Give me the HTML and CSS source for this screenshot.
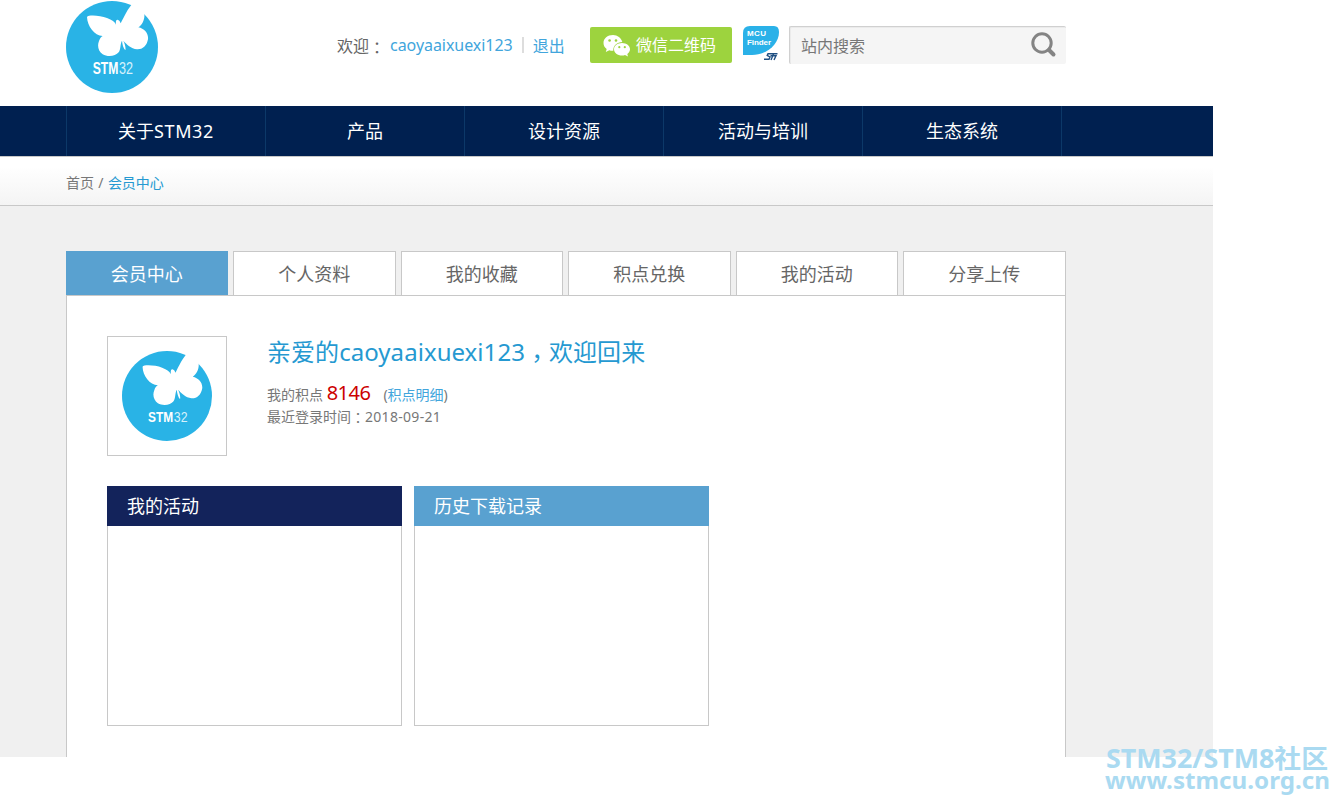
FILE: index.html
```
<!DOCTYPE html>
<html lang="zh-CN">
	<head>
		<meta charset="utf-8">
		<title>会员中心</title>
		<link rel="stylesheet" href="styles.css">
	</head>
	<body>
		<div class="page">
			<div class="header">
				<svg class="logo" viewBox="48 3 276 276">
					<circle cx="186" cy="141" r="138" fill="#29b3e6"/>
					<path fill="#fff" d="M111 51C115 44 150 46 171 54C186 60 195 66 198 74C196 62 200 57 204 60C209 61 210 66 212 70C222 50 234 24 248 11L266 0L294 30L283 40C285 58 277 74 265 82C283 86 296 100 294 118C290 139 277 149 261 148C243 146 230 133 220 122C224 130 228 142 226 151C220 145 217 133 216 122C210 132 213 148 206 157C197 169 173 172 158 163C145 154 141 137 147 123C150 115 153 110 158 108C133 107 112 79 111 51Z"/>
					<text class="logo-bold" x="128" y="221" textLength="77" lengthAdjust="spacingAndGlyphs">STM</text>
					<text class="logo-thin" x="207" y="221" textLength="42" lengthAdjust="spacingAndGlyphs">32</text>
				</svg>
				<div class="welcome">
					<span>欢迎<span class="punc" lang="zh-TW">：</span></span>
					<a class="user">caoyaaixuexi123</a>
					<i class="sep"></i>
					<a>退出</a>
				</div>
				<a class="wechat">
					<svg width="28" height="23" viewBox="0 0 28 23">
						<path fill="#fff" d="M10 1C4.500 1 .5 4.500 .5 9C.5 11.500 1.700 13.500 3.700 15L2.800 18L6.300 16.300Q8 16.900 10.300 16.800C10 11.500 14 8 19.300 8C18.300 4 14.500 1 10 1Z"/>
						<path fill="#fff" d="M19 9C14.500 9 11 11.800 11 15.300C11 19 14.500 21.600 19 21.600Q20.600 21.600 22 21.100L25 22.600L24.300 20C26 18.800 27 17.200 27 15.300C27 11.800 23.500 9 19 9Z"/>
						<g fill="#9dd33e"><circle cx="6.600" cy="6.500" r="1.300"/><circle cx="13" cy="6.500" r="1.300"/><circle cx="16.300" cy="13.200" r="1.100"/><circle cx="21.800" cy="13.200" r="1.100"/></g>
					</svg>
					<span>微信二维码</span>
				</a>
				<svg class="finder" width="38" height="36" viewBox="0 0 38 36">
					<path fill="#2ab1e8" d="M0 29V7Q0 0 7 0H31Q36 0 36 6C36 18 24 29 9 29Z"/>
					<text x="4" y="10" textLength="19">MCU</text>
					<text x="4" y="19" textLength="24">Finder</text>
					<path fill="none" stroke="#1f4f82" stroke-width="1.400" d="M34.500 27.700H25L24.200 29.400L27 31L26 33.300H21M30.500 28L28 34M27.500 29.700H33L31 34"/>
				</svg>
				<div class="search">
					<span>站内搜索</span>
					<svg width="26" height="26" viewBox="0 0 26 26" fill="none" stroke="#848484">
						<circle cx="11" cy="11" r="9.200" stroke-width="3"/>
						<path d="M18 18L22.500 22.500" stroke-width="4" stroke-linecap="round"/>
					</svg>
				</div>
			</div>
			<div class="nav">
				<ul>
					<li>关于<span class="latin">STM32</span></li>
					<li>产品</li>
					<li>设计资源</li>
					<li>活动与培训</li>
					<li>生态系统</li>
				</ul>
			</div>
			<div class="crumb">首页 <span class="slash">/</span> <a>会员中心</a></div>
			<div class="main">
				<ul class="tabs">
					<li class="on">会员中心</li>
					<li>个人资料</li>
					<li>我的收藏</li>
					<li>积点兑换</li>
					<li>我的活动</li>
					<li>分享上传</li>
				</ul>
				<div class="panel">
					<div class="info">
						<div class="avatar">
							<svg viewBox="48 3 276 276">
								<circle cx="186" cy="141" r="138" fill="#29b3e6"/>
								<path fill="#fff" d="M111 51C115 44 150 46 171 54C186 60 195 66 198 74C196 62 200 57 204 60C209 61 210 66 212 70C222 50 234 24 248 11L266 0L294 30L283 40C285 58 277 74 265 82C283 86 296 100 294 118C290 139 277 149 261 148C243 146 230 133 220 122C224 130 228 142 226 151C220 145 217 133 216 122C210 132 213 148 206 157C197 169 173 172 158 163C145 154 141 137 147 123C150 115 153 110 158 108C133 107 112 79 111 51Z"/>
								<text class="logo-bold" x="128" y="221" textLength="77" lengthAdjust="spacingAndGlyphs">STM</text>
								<text class="logo-thin" x="207" y="221" textLength="42" lengthAdjust="spacingAndGlyphs">32</text>
							</svg>
						</div>
						<div class="detail">
							<h2>亲爱的caoyaaixuexi123<span class="punc" lang="zh-TW">，</span>欢迎回来</h2>
							<p class="points">我的积点 <b>8146</b><span class="more">(<a>积点明细</a>)</span></p>
							<p>最近登录时间<span class="punc" lang="zh-TW">：</span><span class="date">2018-09-21</span></p>
						</div>
					</div>
					<div class="cards">
						<div class="card dark"><h3>我的活动</h3></div>
						<div class="card"><h3>历史下载记录</h3></div>
					</div>
				</div>
			</div>
		</div>
		<div class="watermark">
			<svg width="228" height="56">
				<text x="1" y="22" font-size="26" textLength="222" lengthAdjust="spacingAndGlyphs">STM32/STM8社区</text>
				<text x="0" y="43" font-size="24" textLength="225" lengthAdjust="spacingAndGlyphs">www.stmcu.org.cn</text>
			</svg>
		</div>
	</body>
</html>
```
FILE: styles.css
```
* {
	margin: 0;
	padding: 0;
	box-sizing: border-box;
}

body {
	background: #fff;
	color: #666;
	font-family: "Noto Sans", "Noto Sans CJK SC", sans-serif;
	font-size: 16px;
	height: 804px;
	overflow: hidden;
}

ul {
	list-style: none;
}

a {
	color: #41a5dc;
}

/* centred colon and comma */
.punc {
	font-family: "Noto Sans CJK TC", sans-serif;
	line-height: 1;
	vertical-align: -.1em;
}

h2 .punc {
	vertical-align: -.25em;
}

.page {
	width: 1213px;
	height: 757px;
	display: flex;
	flex-direction: column;
}

.header {
	height: 106px;
	padding-left: 66px;
	display: flex;
	align-items: flex-start;
	flex-shrink: 0;
}

.logo {
	width: 92px;
	height: 92px;
	margin-top: 1px;
}

.logo-bold,
.logo-thin {
	font-family: "Liberation Sans", sans-serif;
	font-size: 47px;
	font-weight: bold;
	fill: #fff;
}

.logo-thin {
	font-weight: normal;
	fill: #d5f1fc;
}

.welcome {
	width: 253px;
	margin-left: 179px;
	height: 89px;
	display: flex;
	align-items: center;
	white-space: nowrap;
}

.user {
	margin-left: 5px;
	letter-spacing: -.05px;
}

.sep {
	width: 2px;
	height: 16px;
	margin: 0 9px;
	background: #ddd;
}

.wechat {
	width: 142px;
	height: 36px;
	margin-top: 27px;
	padding-left: 13px;
	border-radius: 2px;
	background: #9dd33e;
	color: #fff;
	display: flex;
	align-items: center;
	gap: 5px;
	white-space: nowrap;
}

.wechat span {
	padding-bottom: 2px;
}

.finder {
	margin: 26px 8px 0 11px;
	font: bold 8px "Liberation Sans", sans-serif;
	fill: #fff;
}

.search {
	width: 277px;
	height: 38px;
	margin-top: 26px;
	padding: 0 9px 1px 11px;
	border-top: 1px solid #d0d0d0;
	border-left: 1px solid #d0d0d0;
	border-radius: 2px;
	background: #f5f5f5;
	box-shadow: inset 1px 1px 0 #ebebeb;
	color: #777;
	display: flex;
	align-items: center;
	justify-content: space-between;
}

.nav {
	height: 50px;
	padding-left: 66px;
	background: #002050;
	flex-shrink: 0;
}

.nav ul {
	width: 996px;
	height: 50px;
	display: flex;
	border-left: 1px solid #0c3868;
}

.nav li {
	width: 199px;
	line-height: 50px;
	border-right: 1px solid #0c3868;
	color: #fff;
	font-size: 18px;
	text-align: center;
}

.latin {
	letter-spacing: .6px;
}

.crumb {
	height: 50px;
	padding-left: 66px;
	border-top: 1px solid #c8c8c8;
	border-bottom: 1px solid #c8c8c8;
	background: linear-gradient(#fff 20%, #f4f4f4);
	color: #777;
	font-size: 14px;
	line-height: 51px;
	flex-shrink: 0;
}

.slash {
	padding: 0 .7px;
}

.crumb a {
	color: #2599d1;
}

.main {
	flex: 1;
	padding: 45px 147px 0 66px;
	background: #f0f0f0;
	display: flex;
	flex-direction: column;
}

.tabs {
	display: grid;
	grid-template-columns: repeat(6, 162.49px);
	gap: 5px;
}

.tabs li {
	height: 44px;
	padding-right: 1px;
	border: 1px solid #c8c8c8;
	border-bottom: 0;
	background: #fff;
	font-size: 18px;
	line-height: 45px;
	text-align: center;
}

.tabs .on {
	border-color: #59a1d0;
	background: #59a1d0;
	color: #fff;
}

.panel {
	flex: 1;
	padding: 40px 40px 0;
	border: 1px solid #c8c8c8;
	border-bottom: 0;
	background: #fff;
}

.info {
	display: flex;
	gap: 40px;
}

.avatar {
	width: 120px;
	height: 120px;
	border: 1px solid #c8c8c8;
	display: flex;
	align-items: center;
	justify-content: center;
}

.avatar svg {
	width: 90px;
	height: 90px;
}

.detail {
	color: #777;
	font-size: 14px;
	line-height: 22px;
	white-space: nowrap;
}

.detail h2 {
	height: 46px;
	color: #2599d1;
	font-size: 24px;
	font-weight: normal;
	line-height: 32px;
	letter-spacing: .05px;
}

.points {
	height: 24px;
}

.points b {
	color: #c00;
	font-size: 20px;
	font-weight: normal;
	letter-spacing: -.5px;
}

.more {
	margin-left: 13px;
}

.date {
	letter-spacing: .3px;
}

.cards {
	display: flex;
	gap: 12px;
	margin-top: 30px;
}

.card {
	width: 295px;
	height: 240px;
	border: 1px solid #c8c8c8;
}

.card h3 {
	height: 40px;
	margin: -1px -1px 0;
	padding-left: 20px;
	background: #59a1d0;
	color: #fff;
	font-size: 18px;
	font-weight: normal;
	line-height: 41px;
}

.dark h3 {
	background: #13235b;
}

/* sits over the bottom right corner of the page */
.watermark {
	position: absolute;
	right: 5px;
	bottom: 0;
	height: 58px;
}

.watermark text {
	fill: #aadaf1;
	font-weight: bold;
}
```
